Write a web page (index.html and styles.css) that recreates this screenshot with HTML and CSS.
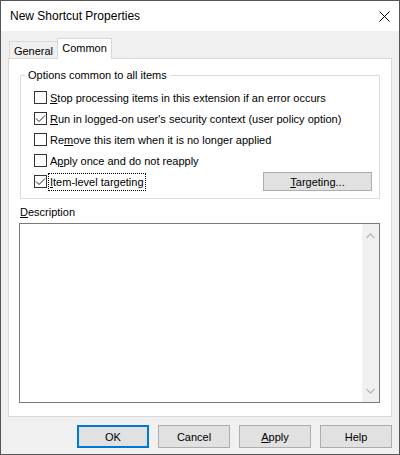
FILE: index.html
```html
<!DOCTYPE html>
<html>
<head>
<meta charset="utf-8">
<link rel="stylesheet" href="styles.css">
</head>
<body>
<div class="window">
  <div class="titlebar">
    <span class="title">New Shortcut Properties</span>
    <svg class="close" width="11" height="11" viewBox="0 0 11 11"><path d="M0.5 0.5 L10.5 10.5 M10.5 0.5 L0.5 10.5" stroke="#000" stroke-width="1" fill="none"/></svg>
  </div>
  <div class="client">
    <div class="tabs">
      <div class="tab">General</div>
      <div class="tab active">Common</div>
    </div>
    <div class="panel">
      <fieldset class="group">
        <legend>Options common to all items</legend>
        <div class="row">
          <span class="cb"></span>
          <span class="label"><u>S</u>top processing items in this extension if an error occurs</span>
        </div>
        <div class="row">
          <span class="cb checked"><svg width="11" height="11" viewBox="0 0 11 11"><path d="M1 5.5 L4 8.5 L10 2.5" stroke="#222" stroke-width="1" fill="none"/></svg></span>
          <span class="label"><u>R</u>un in logged-on user's security context (user policy option)</span>
        </div>
        <div class="row">
          <span class="cb"></span>
          <span class="label">Re<u>m</u>ove this item when it is no longer applied</span>
        </div>
        <div class="row">
          <span class="cb"></span>
          <span class="label">A<u>p</u>ply once and do not reapply</span>
        </div>
        <div class="row">
          <span class="cb checked"><svg width="11" height="11" viewBox="0 0 11 11"><path d="M1 5.5 L4 8.5 L10 2.5" stroke="#222" stroke-width="1" fill="none"/></svg></span>
          <span class="label focus"><u>I</u>tem-level targeting</span>
          <button class="btn targeting"><u>T</u>argeting...</button>
        </div>
      </fieldset>
      <div class="desc-label"><u>D</u>escription</div>
      <div class="textarea">
        <div class="scrollbar">
          <svg width="9" height="6" viewBox="0 0 9 6"><path d="M0.5 5 L4.5 1 L8.5 5" stroke="#b8b8b8" stroke-width="1.3" fill="none"/></svg>
          <svg width="9" height="6" viewBox="0 0 9 6"><path d="M0.5 1 L4.5 5 L8.5 1" stroke="#b8b8b8" stroke-width="1.3" fill="none"/></svg>
        </div>
      </div>
    </div>
    <div class="buttons">
      <button class="btn default">OK</button>
      <button class="btn">Cancel</button>
      <button class="btn"><u>A</u>pply</button>
      <button class="btn">Help</button>
    </div>
  </div>
</div>
</body>
</html>
```
FILE: styles.css
```css
* { box-sizing: border-box; }
html, body { margin: 0; padding: 0; }
body {
  font-family: "Liberation Sans", Arial, sans-serif;
  font-size: 11px;
  color: #000;
  background: #fff;
}
u { text-underline-offset: 1px; }
.window {
  width: 400px;
  height: 455px;
  border: 1px solid #555;
  display: flex;
  flex-direction: column;
  background: #f0f0f0;
}
.titlebar {
  height: 30px;
  background: #fff;
  display: flex;
  align-items: center;
  justify-content: space-between;
  padding: 0 9px 0 9px;
}
.title { font-size: 12px; }
.client {
  flex: 1;
  display: flex;
  flex-direction: column;
  padding: 7px 7px 6px 7px;
}
.tabs {
  display: flex;
  align-items: flex-end;
  height: 21px;
  margin-bottom: -1px;
  padding-left: 1px;
}
.tab {
  height: 18px;
  width: 48px;
  border: 1px solid #d9d9d9;
  border-bottom: none;
  border-right: none;
  background: #f0f0f0;
  display: flex;
  align-items: center;
  justify-content: center;
  line-height: 16px;
}
.tab.active {
  height: 21px;
  width: 55px;
  background: #fff;
  border-right: 1px solid #d9d9d9;
  position: relative;
  z-index: 1;
  padding-bottom: 3px;
}
.panel {
  flex: 1;
  background: #fff;
  border: 1px solid #d9d9d9;
  padding: 8px 11px 13px 11px;
  display: flex;
  flex-direction: column;
}
.group {
  margin: 0;
  padding: 4px 7px 6px 13px;
  border: 1px solid #dcdcdc;
  min-width: 0;
}
.group legend {
  padding: 0 3px;
  margin-left: -9px;
  line-height: 16px;
}
.row {
  height: 21px;
  display: flex;
  align-items: center;
}
.cb {
  width: 13px;
  height: 13px;
  border: 1px solid #333;
  background: #fff;
  flex: none;
  display: flex;
  align-items: center;
  justify-content: center;
  margin-right: 3px;
}
.label { line-height: 16px; white-space: nowrap; }
.focus {
  outline: 1px dotted #000;
  outline-offset: 0;
  padding: 0 1px;
  margin-left: -1px;
}
.btn {
  font-family: inherit;
  font-size: 11px;
  color: #000;
  background: #e1e1e1;
  border: 1px solid #adadad;
  width: 72px;
  height: 23px;
  padding: 0;
  border-radius: 0;
}
.btn.default { border: 2px solid #0078d7; }
.targeting {
  margin-left: auto;
  width: 109px;
  height: 19px;
}
.desc-label {
  margin-top: 5px;
  line-height: 16px;
}
.textarea {
  margin-top: 3px;
  margin-left: -1px;
  flex: 1;
  border: 1px solid #7a7a7a;
  display: flex;
  justify-content: flex-end;
}
.scrollbar {
  width: 17px;
  background: #f0f0f0;
  display: flex;
  flex-direction: column;
  justify-content: space-between;
  align-items: center;
  padding: 9px 0 8px 0;
}
.buttons {
  margin-top: 8px;
  display: flex;
  justify-content: flex-end;
  gap: 9px;
}
```
